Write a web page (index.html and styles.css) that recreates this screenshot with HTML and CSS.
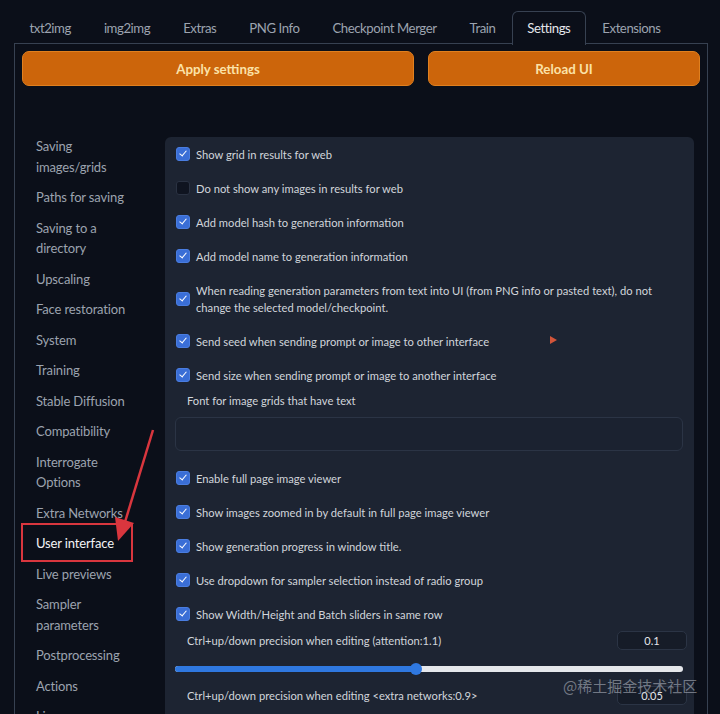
FILE: index.html
```html
<!DOCTYPE html>
<html lang="en">
<head>
  <meta charset="UTF-8">
  <title>Settings</title>
  <link rel="stylesheet" href="styles.css">
</head>
<body>
  <div class="tab-nav">
    <div class="tab">txt2img</div>
    <div class="tab">img2img</div>
    <div class="tab">Extras</div>
    <div class="tab">PNG Info</div>
    <div class="tab">Checkpoint Merger</div>
    <div class="tab">Train</div>
    <div class="tab selected">Settings</div>
    <div class="tab">Extensions</div>
  </div>

  <div class="tab-panel">
    <div class="actions">
      <button class="btn">Apply settings</button>
      <button class="btn">Reload UI</button>
    </div>

    <div class="settings">
      <ul class="sidebar">
        <li>Saving<br>images/grids</li>
        <li>Paths for saving</li>
        <li>Saving to a<br>directory</li>
        <li>Upscaling</li>
        <li>Face restoration</li>
        <li>System</li>
        <li>Training</li>
        <li>Stable Diffusion</li>
        <li>Compatibility</li>
        <li>Interrogate<br>Options</li>
        <li>Extra Networks</li>
        <li class="active">User interface</li>
        <li>Live previews</li>
        <li>Sampler<br>parameters</li>
        <li>Postprocessing</li>
        <li>Actions</li>
        <li>Licenses</li>
      </ul>

      <div class="panel">
        <label class="check"><span class="box on"></span><span>Show grid in results for web</span></label>
        <label class="check"><span class="box"></span><span>Do not show any images in results for web</span></label>
        <label class="check"><span class="box on"></span><span>Add model hash to generation information</span></label>
        <label class="check"><span class="box on"></span><span>Add model name to generation information</span></label>
        <label class="check"><span class="box on"></span><span>When reading generation parameters from text into UI (from PNG info or pasted text), do not<br>change the selected model/checkpoint.</span></label>
        <label class="check"><span class="box on"></span><span>Send seed when sending prompt or image to other interface</span><span class="marker"></span></label>
        <label class="check"><span class="box on"></span><span>Send size when sending prompt or image to another interface</span></label>

        <div class="field">
          <div class="field-label">Font for image grids that have text</div>
          <div class="text-input"></div>
        </div>

        <label class="check"><span class="box on"></span><span>Enable full page image viewer</span></label>
        <label class="check"><span class="box on"></span><span>Show images zoomed in by default in full page image viewer</span></label>
        <label class="check"><span class="box on"></span><span>Show generation progress in window title.</span></label>
        <label class="check"><span class="box on"></span><span>Use dropdown for sampler selection instead of radio group</span></label>
        <label class="check"><span class="box on"></span><span>Show Width/Height and Batch sliders in same row</span></label>

        <div class="slider">
          <div class="slider-head">
            <span>Ctrl+up/down precision when editing (attention:1.1)</span>
            <span class="num">0.1</span>
          </div>
          <div class="track"><div class="fill" style="width: 47.5%"></div></div>
        </div>

        <div class="slider">
          <div class="slider-head">
            <span>Ctrl+up/down precision when editing &lt;extra networks:0.9&gt;</span>
            <span class="num">0.05</span>
          </div>
        </div>
      </div>
    </div>
  </div>

  <!-- annotation drawn on the screenshot -->
  <div class="highlight"></div>
  <svg class="arrow" width="720" height="714" viewBox="0 0 720 714">
    <line x1="153" y1="430" x2="125" y2="522" stroke="#d9363e" stroke-width="2.5"/>
    <polygon points="118,541 115,517 134,523" fill="#d9363e"/>
  </svg>

  <div class="watermark">@稀土掘金技术社区</div>
</body>
</html>
```

FILE: styles.css
```css
body {
  margin: 0;
  background-color: #0b0f19;
  font-family: "Lato", "Noto Sans", sans-serif;
  color: #d1d5db;
  height: 714px;
  overflow: hidden;
}

.tab-nav {
  display: flex;
  padding: 11px 0 0 13px;
  height: 32px;
}

.tab {
  flex-shrink: 0;
  white-space: nowrap;
  padding: 0 15.5px;
  font-size: 13.2px;
  letter-spacing: -0.45px;
  line-height: 32px;
  color: #9ca3af;
  border: 1px solid transparent;
  border-bottom: none;
  border-radius: 6px 6px 0 0;
}

.tab.selected {
  padding: 0 14.5px;
  color: #e5e7eb;
  border-color: #374151;
  background-color: #0b0f19;
  margin-bottom: -1px;
  position: relative;
  z-index: 1;
  height: 33px;
}

.tab-panel {
  margin: 0 12px 0 14px;
  border: 1px solid #374151;
  border-bottom: none;
  padding: 7px 7px 0 7px;
  height: 700px;
}

.actions {
  display: grid;
  grid-template-columns: 392px 1fr;
  gap: 14px;
}

.btn {
  height: 35px;
  border: 1px solid #e0801f;
  border-radius: 7px;
  background-color: #cc650b;
  color: #fbe2a8;
  font-family: "Lato", "Noto Sans", sans-serif;
  font-weight: bold;
  font-size: 13.3px;
}

.settings {
  display: flex;
  margin-top: 51px;
}

.sidebar {
  list-style: none;
  margin: -6px 0 0 0;
  padding: 0 0 0 14px;
  width: 129px;
  flex-shrink: 0;
}

.sidebar li {
  font-size: 13px;
  letter-spacing: -0.15px;
  line-height: 20.5px;
  padding: 5px 0;
  color: #9ca3af;
}

.sidebar li.active {
  color: #f3f4f6;
}

.panel {
  flex: 1;
  margin-right: 6px;
  background-color: #1d2432;
  border-radius: 6px 6px 0 0;
  padding: 0 11px 0 10px;
  height: 600px;
}

.check {
  display: flex;
  align-items: center;
  gap: 6px;
  padding: 8.5px 0 8.5px 1px;
  font-size: 11.2px;
  line-height: 17px;
  color: #d1d5db;
  position: relative;
}

.box {
  width: 12px;
  height: 12px;
  flex-shrink: 0;
  border-radius: 3px;
  background-color: #0f1420;
  border: 1px solid #2a3242;
}

.box.on {
  background-color: #3a6ed6;
  border-color: #4a7de0;
  position: relative;
}

.box.on::after {
  content: "";
  position: absolute;
  left: 3.5px;
  top: 1px;
  width: 3px;
  height: 6px;
  border: solid #fff;
  border-width: 0 1.6px 1.6px 0;
  transform: rotate(40deg);
}

.marker {
  position: absolute;
  left: 375px;
  top: 12px;
  width: 0;
  height: 0;
  border-top: 4px solid transparent;
  border-bottom: 4px solid transparent;
  border-left: 7px solid #d2553a;
}

.field {
  padding-bottom: 10px;
}

.field-label {
  font-size: 11.2px;
  line-height: 17px;
  padding: 0 0 0 12px;
}

.text-input {
  margin-top: 8px;
  height: 32px;
  border: 1px solid #2b3445;
  border-radius: 6px;
  background-color: #1b2230;
}

.slider-head {
  display: flex;
  justify-content: space-between;
  align-items: center;
  font-size: 11.2px;
  padding-left: 12px;
  margin-right: -4px;
}

.num {
  width: 68px;
  height: 17px;
  line-height: 17px;
  text-align: center;
  border: 1px solid #2b3445;
  border-radius: 5px;
  background-color: #161c28;
  color: #e5e7eb;
  font-size: 11px;
}

.slider:first-of-type .slider-head {
  padding-top: 2px;
}

.track {
  margin: 16px 0 14px;
  height: 6px;
  border-radius: 3px;
  background-color: #e5e7eb;
  position: relative;
}

.fill {
  height: 100%;
  border-radius: 3px;
  background-color: #2f78e0;
  position: relative;
}

.fill::after {
  content: "";
  position: absolute;
  right: -6px;
  top: -3px;
  width: 12px;
  height: 12px;
  border-radius: 50%;
  background-color: #2f78e0;
}

.highlight {
  position: absolute;
  left: 21px;
  top: 523px;
  width: 108px;
  height: 35px;
  border: 2px solid #d9363e;
}

.arrow {
  position: absolute;
  left: 0;
  top: 0;
  pointer-events: none;
}

.watermark {
  position: absolute;
  left: 563px;
  top: 675px;
  font-family: "Noto Sans CJK SC", sans-serif;
  font-size: 15px;
  color: rgba(190, 195, 205, 0.55);
}
```
